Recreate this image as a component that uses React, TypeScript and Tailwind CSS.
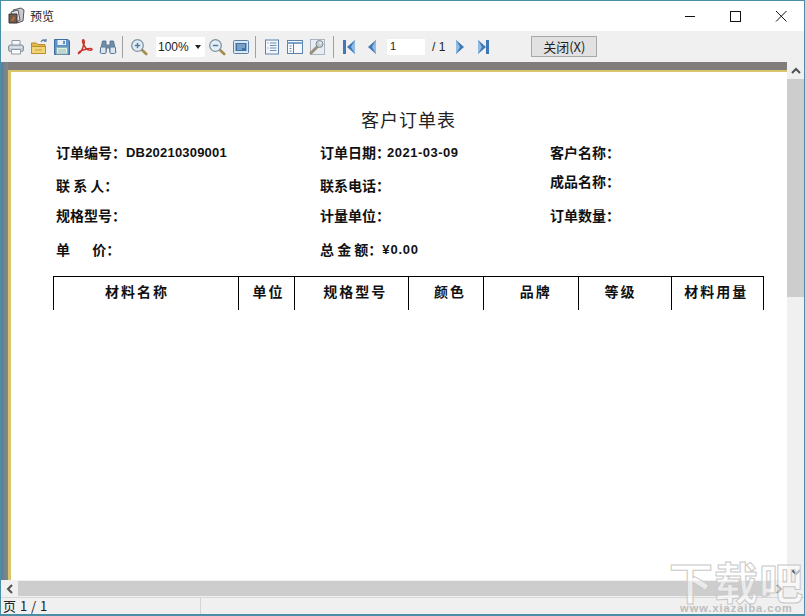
import type { ReactNode } from 'react';

const CJK = 'font-["Noto_Sans_CJK_SC","Liberation_Sans",sans-serif]';

function Icon({ children }: { children: ReactNode }) {
  return (
    <svg width="18" height="18" viewBox="0 0 18 18" className="shrink-0" aria-hidden="true">
      {children}
    </svg>
  );
}

function Printer() {
  return (
    <Icon>
      <path d="M5 7V2.500h8V7" fill="#f4f6f8" stroke="#8f9aa5" />
      <rect x="1.500" y="7" width="15" height="6.500" rx="2" fill="#c3ccd4" stroke="#7f8b97" />
      <path d="M4.500 11.500h9V16h-9z" fill="#fbfcfd" stroke="#8f9aa5" />
      <path d="M3 9.200h12" stroke="#e8edf1" />
    </Icon>
  );
}

function Folder() {
  return (
    <Icon>
      <path d="M1.500 5h5l1.500 1.500h7V15.500h-13.500z" fill="#e2b94e" stroke="#b98a2a" />
      <path d="M1.500 8.500h14v7h-14z" fill="#f3d476" stroke="#bb8e2f" />
      <path d="M5 12h7" stroke="#c99f3c" />
      <path d="M11 4c1-2 3-2.500 5-1.500M16 1v2.200h-2.200" fill="none" stroke="#5c7e9c" strokeWidth="1.200" />
    </Icon>
  );
}

function Save() {
  return (
    <Icon>
      <path d="M1.500 1.500h13.500l1.500 1.500v13.500h-15z" fill="#5f94c8" stroke="#3f6f9f" />
      <rect x="4.500" y="2" width="8.500" height="5" fill="#e7eff6" />
      <rect x="10" y="2.800" width="2" height="3.400" fill="#5f94c8" />
      <rect x="3.500" y="9.500" width="11" height="6.500" fill="#dff0dd" stroke="#8fb0b8" />
      <path d="M5 12h8M5 14h8" stroke="#9dbcc0" />
    </Icon>
  );
}

function Pdf() {
  return (
    <Icon>
      <path
        d="M2.500 15.500c1.500.5 4-4 5.500-9.500.4-1.800.4-4-.6-4.200-1.200-.2-1 2.500.1 4.500 1.400 2.800 3.500 5.200 5.500 5.700 2 .4 3.300-.2 2.900-1-.5-.8-3.700-.6-7.100.5-3.500 1.100-6.300 2.800-6.300 3.500z"
        fill="none"
        stroke="#c9332e"
        strokeWidth="1.500"
      />
    </Icon>
  );
}

function Binoculars() {
  return (
    <Icon>
      <path d="M3.500 3h3.500v4h4V3h3.500l2.500 11.500h-6L10.500 10h-3L7 14.500H1z" fill="#6f8ea9" stroke="#4d6c88" strokeWidth=".8" />
      <rect x="1.500" y="9" width="5.500" height="6.500" rx="1" fill="#dbe5ee" stroke="#5d7b96" />
      <rect x="11" y="9" width="5.500" height="6.500" rx="1" fill="#dbe5ee" stroke="#5d7b96" />
    </Icon>
  );
}

function Zoom({ plus }: { plus?: boolean }) {
  return (
    <Icon>
      <path d="M11 11l5.200 5" stroke="#a48d4c" strokeWidth="2.600" strokeLinecap="round" />
      <circle cx="7.500" cy="7.500" r="5.800" fill="#e6eef3" stroke="#7d94a6" strokeWidth="1.300" />
      <path d="M4.800 7.500h5.400" stroke="#4f7fa6" strokeWidth="1.500" />
      {plus && <path d="M7.500 4.800v5.400" stroke="#4f7fa6" strokeWidth="1.500" />}
    </Icon>
  );
}

function PageWidth() {
  return (
    <Icon>
      <rect x="1.500" y="2.500" width="15" height="13" rx="1" fill="#dbe7f2" stroke="#5b83aa" />
      <rect x="3.500" y="5" width="11" height="8" fill="#3f73a8" />
      <path d="M5 7h8M5 9h8M5 11h5" stroke="#b5cde3" />
    </Icon>
  );
}

function Outline() {
  return (
    <Icon>
      <rect x="2.500" y="2" width="13" height="14" fill="#f3f7fb" stroke="#5b83aa" />
      <path d="M7 5h6.500M7 7.500h6.500M7 10h6.500M7 12.500h6.500M4.500 5h1M4.500 10h1" stroke="#6d8eae" />
    </Icon>
  );
}

function Sidebar() {
  return (
    <Icon>
      <rect x="1.500" y="2.500" width="15" height="13" fill="#f6f9fc" stroke="#5b83aa" />
      <path d="M1.500 5h15" stroke="#7ea3c6" strokeWidth="2" />
      <path d="M7.500 5v10" stroke="#5b83aa" />
      <path d="M3.500 8h2M3.500 10.500h2M3.500 13h2" stroke="#6d8eae" />
    </Icon>
  );
}

function Wrench() {
  return (
    <Icon>
      <rect x="2.500" y="1.500" width="14" height="15" fill="#e8edf2" stroke="#a9b5c0" />
      <path d="M3 15l6.500-6.500" stroke="#9a8f7a" strokeWidth="3" strokeLinecap="round" />
      <circle cx="11.500" cy="6" r="3.500" fill="#c4ccd4" stroke="#7f8b97" />
      <circle cx="12.500" cy="5" r="1.300" fill="#e8edf2" />
    </Icon>
  );
}

const NAV_LIGHT = '#8fbde6';
const NAV_DARK = '#3f78b4';

function NavArrow({ dir, bar }: { dir: 'left' | 'right'; bar?: boolean }) {
  const d = dir === 'left' ? 'M14 2v14L6 9z' : 'M5 2v14l8-7z';
  const barX = dir === 'left' ? 3.500 : 14.500;
  return (
    <Icon>
      <path d={d} fill={NAV_DARK} />
      <path d={dir === 'left' ? 'M14 2v14l-4-7z' : 'M5 2v14l4-7z'} fill={NAV_LIGHT} />
      {bar && <path d={`M${barX} 2v14`} stroke={NAV_DARK} strokeWidth="3" />}
    </Icon>
  );
}

function Sep() {
  return <div className="h-[22px] w-px shrink-0 bg-[#a0a0a0]" />;
}

function Chevron({ d }: { d: string }) {
  return (
    <svg width="10" height="10" viewBox="0 0 10 10" aria-hidden="true">
      <path d={d} fill="none" stroke="#505050" strokeWidth="2" />
    </svg>
  );
}

function Field({ label, value, className = '', valueClass = '' }: { label: string; value?: string; className?: string; valueClass?: string }) {
  return (
    <div className={`flex items-center whitespace-pre ${className}`}>
      <span>{label}：</span>
      {value && <span className={`font-["Liberation_Sans",sans-serif] text-[13px] tracking-[0.2px] ${valueClass}`}>{value}</span>}
    </div>
  );
}

const COLUMNS = [
  { label: '材料名称', width: 'w-[186px]', pad: 'pl-[51px]' },
  { label: '单位', width: 'w-[56px]', pad: 'pl-[13px]' },
  { label: '规格型号', width: 'w-[114px]', pad: 'pl-[28px]' },
  { label: '颜色', width: 'w-[75px]', pad: 'pl-[25px]' },
  { label: '品牌', width: 'w-[95px]', pad: 'pl-[36px]' },
  { label: '等级', width: 'w-[94px]', pad: 'pl-[26px]' },
  { label: '材料用量', width: 'w-[91px]', pad: 'pl-[12px]' },
];

export default function App() {
  return (
    <div className={`relative flex h-[616px] w-[805px] flex-col overflow-hidden border-t border-b-2 border-x border-[#4b8fa6] bg-white text-black ${CJK}`}>
      {/* title bar */}
      <div className="flex h-[30px] shrink-0 items-center bg-white pl-[7px]">
        <svg width="17" height="18" viewBox="0 0 17 18" aria-hidden="true">
          <path d="M5 3l8-2 3 2-1 11-6 2z" fill="#c9c9cf" stroke="#55555c" />
          <path d="M3 5l7-2 2 10-6 3z" fill="#e6e6ea" stroke="#5e5e66" />
          <path d="M1 7h8v9H1z" fill="#6d5d52" stroke="#3e3430" />
          <path d="M3 14l3-5 1 2-2 3z" fill="#c8702c" />
        </svg>
        <span className="ml-[5px] text-[12px] leading-none text-[#222]">预览</span>
        <div className="ml-auto flex items-center">
          <svg width="130" height="12" viewBox="0 0 130 12" className="mr-[13px]" aria-hidden="true">
            <path d="M24 6.500h10" stroke="#111" />
            <rect x="69.500" y="1.500" width="10" height="10" fill="none" stroke="#111" />
            <path d="M115 1l10.500 10.500M125.500 1L115 11.500" stroke="#111" />
          </svg>
        </div>
      </div>

      {/* toolbar */}
      <div className="flex h-[31px] shrink-0 items-center bg-[#f0f0f0] text-[11px]">
        <div className="ml-[6px] flex w-[112px] justify-between pr-[2px]">
          <Printer />
          <Folder />
          <Save />
          <Pdf />
          <Binoculars />
        </div>
        <div className="ml-[3px]"><Sep /></div>
        <div className="ml-[7px]"><Zoom plus /></div>
        <div className="ml-[8px] flex h-[20px] w-[49px] items-center justify-between bg-white pl-[2px] pr-[4px] font-['Liberation_Sans',sans-serif] text-[12px] text-[#222]">
          <span>100%</span>
          <span className="h-0 w-0 border-x-[3px] border-t-[4px] border-x-transparent border-t-[#222]" />
        </div>
        <div className="ml-[3px]"><Zoom /></div>
        <div className="ml-[6px]"><PageWidth /></div>
        <div className="ml-[5px]"><Sep /></div>
        <div className="ml-[7px]"><Outline /></div>
        <div className="ml-[5px]"><Sidebar /></div>
        <div className="ml-[4px]"><Wrench /></div>
        <div className="ml-[7px]"><Sep /></div>
        <div className="ml-[7px]"><NavArrow dir="left" bar /></div>
        <div className="ml-[3px]"><NavArrow dir="left" /></div>
        <div className="ml-[7px] flex h-[16px] w-[38px] items-center bg-white pl-[3px] font-['Liberation_Sans',sans-serif] text-[11px] text-[#222]">1</div>
        <span className="ml-[7px] font-['Liberation_Sans',sans-serif] text-[12px] text-[#222]">/ 1</span>
        <div className="ml-[6px]"><NavArrow dir="right" /></div>
        <div className="ml-[4px]"><NavArrow dir="right" bar /></div>
        <div className="ml-[40px] flex h-[21px] w-[66px] items-center justify-center border border-[#a8a8a8] bg-[#e1e1e1] text-[13px] text-[#222]">
          关闭(X)
        </div>
      </div>

      {/* report area + vertical scrollbar */}
      <div className="flex min-h-0 flex-1">
        <div className="flex min-w-0 flex-1 flex-col bg-[linear-gradient(90deg,#5b7f9d_0,#8a8680_7px,#807c7c_7px)] pl-[7px] pt-[8px]">
          <div className="flex-1 border-l-[3px] border-t-[2px] border-[#d9c56c] bg-white">
            <div className="w-[775px] pl-[45px] pt-[35px] text-[14px] font-bold leading-none text-[#111]">
              <div className="flex h-[24px] items-center pl-[305px] text-[18px] font-normal tracking-[1px] text-[#222]">
                客户订单表
              </div>
              <div className="mt-[13px] flex h-[16px]">
                <Field label="订单编号" value="DB20210309001" className="w-[264px]" />
                <Field label="订单日期" value="2021-03-09" className="w-[230px]" valueClass="-ml-[3px] tracking-[0.5px]" />
                <Field label="客户名称" />
              </div>
              <div className="mt-[17px] flex h-[16px]">
                <Field label="联 系 人" className="w-[264px]" />
                <Field label="联系电话" className="w-[230px]" />
                <Field label="成品名称" className="pb-[8px]" />
              </div>
              <div className="mt-[14px] flex h-[16px]">
                <Field label="规格型号" className="w-[264px]" />
                <Field label="计量单位" className="w-[230px]" />
                <Field label="订单数量" />
              </div>
              <div className="mt-[18px] flex h-[16px]">
                <Field label="单       价" className="w-[264px]" />
                <Field label="总 金 额" value="¥0.00" className="w-[230px]" valueClass="tracking-[0.8px]" />
              </div>
              {/* table header, no bottom rule in the original */}
              <div className="-ml-[3px] mt-[19px] flex h-[34px] w-[711px] border-l border-r border-t border-black">
                {COLUMNS.map((col, i) => (
                  <div
                    key={col.label}
                    className={`flex items-center pb-[6px] tracking-[2px] ${col.width} ${col.pad} ${i < COLUMNS.length - 1 ? 'border-r border-black' : ''}`}
                  >
                    {col.label}
                  </div>
                ))}
              </div>
            </div>
          </div>
        </div>
        <div className="flex w-[17px] shrink-0 flex-col bg-[#f0f0f0]">
          <div className="flex h-[17px] items-center justify-center"><Chevron d="M1 7l4-4 4 4" /></div>
          <div className="h-[218px] bg-[#cdcdcd]" />
          <div className="flex-1" />
          <div className="flex h-[17px] items-center justify-center"><Chevron d="M1 3l4 4 4-4" /></div>
        </div>
      </div>

      {/* horizontal scrollbar */}
      <div className="flex h-[17px] shrink-0 bg-[#f0f0f0]">
        <div className="flex w-[17px] items-center justify-center"><Chevron d="M7 1L3 5l4 4" /></div>
        <div className="my-px w-[752px] bg-[#cdcdcd]" />
        <div className="flex w-[17px] items-center justify-center"><Chevron d="M3 1l4 4-4 4" /></div>
      </div>

      {/* status bar */}
      <div className="flex h-[17px] shrink-0 items-center border-t border-[#d8d8d8] bg-[#f0f0f0] text-[13px] text-[#222]">
        <div className="flex h-full w-[200px] items-center border-r border-[#d4d4d4] pl-[2px] tracking-[0.5px]">页 1 / 1</div>
      </div>

      {/* site watermark over the corner */}
      <div className="pointer-events-none absolute bottom-0 right-0 flex w-[135px] flex-col items-center leading-none">
        <span className="text-[44px] font-bold tracking-[1px] text-white/60 [-webkit-text-stroke:1px_#c8c8c8]">下载吧</span>
        <span className="font-['Liberation_Sans',sans-serif] text-[11px] font-bold tracking-[1px] text-[#bdbdbd]">www.xiazaiba.com</span>
      </div>
    </div>
  );
}
